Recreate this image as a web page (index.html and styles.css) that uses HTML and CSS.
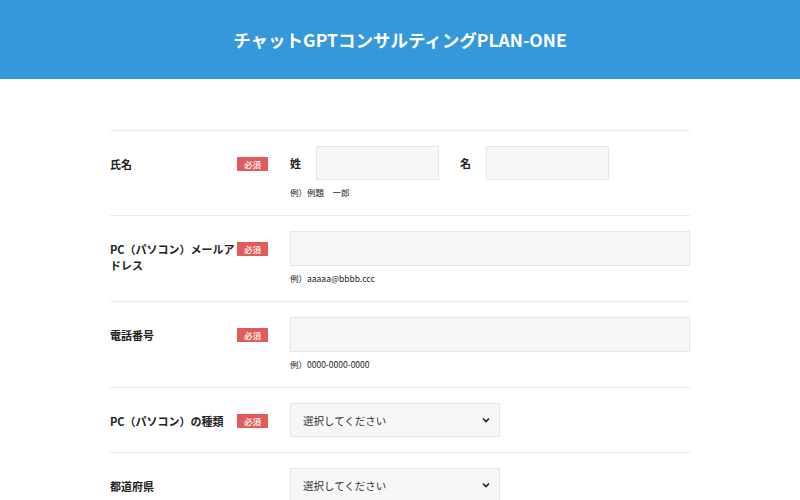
FILE: index.html
```html
<!DOCTYPE html>
<html lang="ja">
<head>
  <meta charset="UTF-8">
  <meta name="viewport" content="width=device-width, initial-scale=1.0">
  <title>チャットGPTコンサルティングPLAN-ONE</title>
  <link rel="stylesheet" href="styles.css">
</head>
<body>
  <header class="site-header">
    <h1>チャットGPTコンサルティングPLAN-ONE</h1>
  </header>

  <main class="form-wrap">
    <div class="form-row">
      <div class="form-label">氏名</div>
      <div class="form-badge"><span class="badge">必須</span></div>
      <div class="form-field">
        <div class="name-fields">
          <div class="name-part">
            <span class="sub-label">姓</span>
            <input type="text" class="input input-name">
          </div>
          <div class="name-part">
            <span class="sub-label">名</span>
            <input type="text" class="input input-name">
          </div>
        </div>
        <p class="example">例）例題　一郎</p>
      </div>
    </div>

    <div class="form-row">
      <div class="form-label">PC（パソコン）メールアドレス</div>
      <div class="form-badge"><span class="badge">必須</span></div>
      <div class="form-field">
        <input type="text" class="input input-full">
        <p class="example">例）aaaaa@bbbb.ccc</p>
      </div>
    </div>

    <div class="form-row">
      <div class="form-label">電話番号</div>
      <div class="form-badge"><span class="badge">必須</span></div>
      <div class="form-field">
        <input type="text" class="input input-full">
        <p class="example">例）0000-0000-0000</p>
      </div>
    </div>

    <div class="form-row">
      <div class="form-label">PC（パソコン）の種類</div>
      <div class="form-badge"><span class="badge">必須</span></div>
      <div class="form-field">
        <div class="select">
          <span>選択してください</span>
          <svg class="chevron" width="8" height="6" viewBox="0 0 8 6"><polyline points="1,1.5 4,4.5 7,1.5" fill="none" stroke="#222" stroke-width="1.6"/></svg>
        </div>
      </div>
    </div>

    <div class="form-row">
      <div class="form-label">都道府県</div>
      <div class="form-badge"></div>
      <div class="form-field">
        <div class="select">
          <span>選択してください</span>
          <svg class="chevron" width="8" height="6" viewBox="0 0 8 6"><polyline points="1,1.5 4,4.5 7,1.5" fill="none" stroke="#222" stroke-width="1.6"/></svg>
        </div>
      </div>
    </div>
  </main>
</body>
</html>
```

FILE: styles.css
```css
body, html {
  margin: 0;
  padding: 0;
  font-family: "Noto Sans CJK JP", "Noto Sans", sans-serif;
  color: #333;
  background-color: #fff;
}

.site-header {
  background-color: #3498db;
  height: 79px;
  display: flex;
  align-items: center;
  justify-content: center;
}

.site-header h1 {
  margin: 0;
  color: #fff;
  font-size: 17.5px;
  font-weight: bold;
}

.form-wrap {
  width: 580px;
  margin: 51px auto 0;
}

.form-row {
  display: grid;
  grid-template-columns: 127px 53px 1fr;
  border-top: 1px solid #ebebeb;
  padding: 15px 0;
}

.form-label {
  margin-top: 10px;
  font-size: 11px;
  line-height: 16px;
  font-weight: bold;
  color: #222;
}

.badge {
  display: block;
  width: 31px;
  height: 14px;
  margin-top: 11px;
  background-color: #e25b5b;
  color: #fff;
  font-size: 8.5px;
  font-weight: 500;
  line-height: 14px;
  text-align: center;
}

.input {
  display: block;
  box-sizing: border-box;
  background-color: #f7f7f7;
  border: 1px solid #e6e6e6;
  padding: 0 10px;
  font-family: inherit;
  font-size: 11px;
  margin: 0;
}

.input-full {
  width: 100%;
  height: 35px;
}

.input-name {
  width: 123px;
  height: 34px;
}

.name-fields {
  display: flex;
  gap: 21px;
}

.name-part {
  display: flex;
  align-items: center;
}

.sub-label {
  font-size: 11px;
  font-weight: bold;
  color: #222;
  width: 26px;
}

.example {
  margin: 4px 0 0;
  font-size: 8.5px;
  line-height: 16px;
  color: #222;
}

.select {
  box-sizing: border-box;
  width: 210px;
  height: 34px;
  background-color: #f7f7f7;
  border: 1px solid #e6e6e6;
  display: flex;
  align-items: center;
  justify-content: space-between;
  padding: 0 9px 0 12px;
  font-size: 10.5px;
  color: #333;
}
```
